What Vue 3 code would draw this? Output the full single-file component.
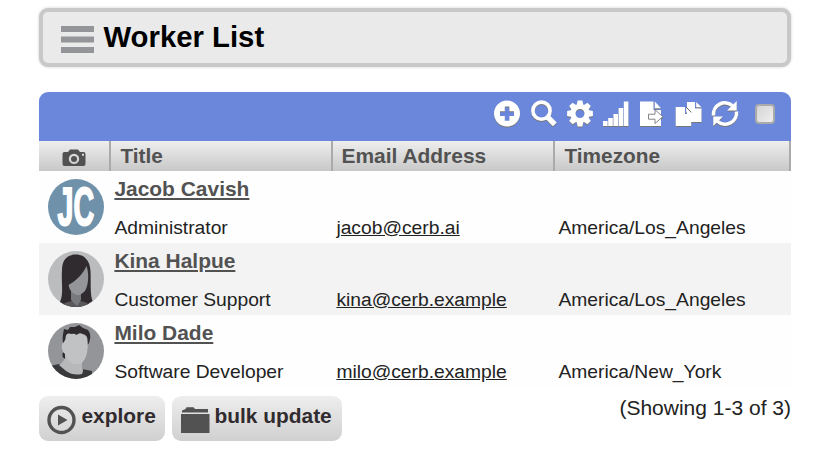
<script setup>
const workers = [
  { name: 'Jacob Cavish', title: 'Administrator', email: 'jacob@cerb.ai', zone: 'America/Los_Angeles', avatar: 'initials' },
  { name: 'Kina Halpue', title: 'Customer Support', email: 'kina@cerb.example', zone: 'America/Los_Angeles', avatar: 'woman' },
  { name: 'Milo Dade', title: 'Software Developer', email: 'milo@cerb.example', zone: 'America/New_York', avatar: 'man' },
]
</script>

<template>
  <main class="page">
    <header class="title-box">
      <svg class="menu" width="33" height="28" viewBox="0 0 33 28"><path fill="#949599" d="M0 0h33v6H0zM0 10.5h33v6H0zM0 21h33v6H0z" /></svg>
      <h1>Worker List</h1>
    </header>

    <section class="worklist">
      <div class="toolbar">
        <svg class="tool" width="28" height="30" viewBox="0 0 28 30"><path fill="#fff" fill-rule="evenodd" d="M14 1.500a13 13 0 1 0 0 26 13 13 0 0 0 0-26zM11.800 7.500h4.600v4.800H21v4.600h-4.600v4.800h-4.600v-4.800H7v-4.600h4.800z" /></svg>
        <svg class="tool" width="28" height="30" viewBox="0 0 28 30"><g fill="none" stroke="#fff"><circle cx="11.500" cy="11.700" r="8.600" stroke-width="3.600" /><path stroke-width="5.400" d="M17.200 17.600l7.600 7.700" /></g></svg>
        <svg class="tool" width="28" height="30" viewBox="0 0 28 30"><g transform="translate(14 14.500)"><g fill="#fff"><path v-for="n in 8" :key="n" :transform="`rotate(${n * 45})`" d="M-3.400-8l1-4.900h4.800l1 4.900z" /></g><circle r="7" fill="none" stroke="#fff" stroke-width="5" /></g></svg>
        <svg class="tool" width="28" height="30" viewBox="0 0 28 30"><path fill="#fff" d="M1 22h4.600v5H1zM6.200 19h4.600v8H6.200zM11.400 15H16v12h-4.600zM16.600 9h4.600v18h-4.600zM21.800 2.500h4.600V27h-4.600z" /></svg>
        <svg class="tool" width="28" height="30" viewBox="0 0 28 30"><path fill="#fff" d="M2 2.500h13.500v8.500h7.500V27H2zM16.800 2.500l6.200 6.700h-6.200z" /><path fill="#fff" stroke="#777" stroke-width=".9" d="M10.500 15.200H17v-4.500l7.800 7-7.800 6.800v-4.300h-6.500z" /></svg>
        <svg class="tool" width="28" height="30" viewBox="0 0 28 30"><path fill="#fff" d="M12 3h8v6.500h6.500V23H12z" /><path fill="#fff" d="M21.200 3l5.300 5.300h-5.300zM.7 8H10v7h6.200v12H.7zM11.200 8l5 5.500h-5z" /><path fill="none" stroke="#555" stroke-width=".9" d="M10.900 7.800l5.300 5.600" /></svg>
        <svg class="tool" width="28" height="30" viewBox="0 0 28 30"><g fill="none" stroke="#fff" stroke-width="3.500"><path d="M2.500 16.500A11.400 11.400 0 0 1 21.500 6.800M25.500 12.500A11.400 11.400 0 0 1 6.500 22.200" /></g><path fill="#fff" d="M25.700 2v9.500h-9.600zM2.300 27v-9.500h9.600z" /></svg>
        <span class="checkbox"></span>
      </div>

      <div class="columns">
        <div class="column photo">
          <svg width="24" height="18" viewBox="0 0 24 18"><path fill="#525252" fill-rule="evenodd" d="M2.500 3H6l2-2.600h8L18 3h3.500Q23.500 3 23.500 5v10q0 2-2 2h-19q-2 0-2-2V5q0-2 2-2zM12 4.700a5.200 5.200 0 1 0 0 10.400A5.200 5.200 0 0 0 12 4.700zm0 2.200a3 3 0 1 1 0 6A3 3 0 0 1 12 6.900zm8-2.200v2h2v-2z" /></svg>
        </div>
        <div class="column">Title</div>
        <div class="column email-column">Email Address</div>
        <div class="column">Timezone</div>
      </div>

      <article v-for="worker in workers" :key="worker.name" class="worker">
        <div class="portrait">
          <svg v-if="worker.avatar === 'initials'" class="avatar" viewBox="0 0 56 56">
            <circle cx="28" cy="28" r="28" fill="#6f92aa" />
            <text class="initials" transform="translate(9.500 46) scale(.54 1)">JC</text>
          </svg>
          <svg v-else-if="worker.avatar === 'woman'" class="avatar" viewBox="0 0 56 56">
            <circle cx="28" cy="28" r="28" fill="#bbbcbe" />
            <path fill="#302b2e" d="M12 51C16 43 13 31 14 19 14 8 20 3.500 28 3.500S42 9 42.500 20C43 32 42 43 44.500 50Q37 56 28 56T12 51z" />
            <path fill="#59595c" d="M15 53Q18 51 24 50l8 0q6 1 8 3-5 3-12 3t-13-3z" />
            <path fill="#78797c" d="M23 40h10v9l-4 6-6-6z" />
            <path fill="#949599" d="M38.500 15C41 22 41 33 37 40Q32 45 29 44 22 42 20.500 34C28 30 35 23 38.500 15z" />
          </svg>
          <svg v-else class="avatar" viewBox="0 0 56 56">
            <defs><clipPath id="portrait-circle"><circle cx="28" cy="28" r="28" /></clipPath></defs>
            <g clip-path="url(#portrait-circle)">
              <path fill="#949599" d="M0 0h56v56H0z" />
              <path fill="#39393b" d="M2 43l9-2 23 5 10 2v9H5z" />
              <path fill="#b7b8ba" d="M17 30h17v15q2 2 0 6-9 2-16-3L11 42q6-3 6-11z" />
              <path fill="#302b2e" d="M15 20c-1-5 0-9 1-14l4 1 2-3 5 0 4-2 4 3 5 2q4 5 1 13l-3 4V18H18v3h-3zM15 29l2 1v6q-4-2-2-7z" />
              <path fill="#c1c2c4" d="M17.500 16q0-7 6-5 3-1 5 1 3-3 6-1 5 1 5 6 1 6-.5 13-2 9-7.500 11h-6q-6-3-8.500-10l-2-2q-2-4-1-8l2-2z" />
            </g>
          </svg>
        </div>
        <a class="name">{{ worker.name }}</a>
        <div class="cell title-cell">{{ worker.title }}</div>
        <div class="cell"><a>{{ worker.email }}</a></div>
        <div class="cell">{{ worker.zone }}</div>
      </article>
    </section>

    <footer class="actions">
      <button class="explore" type="button">
        <svg width="30" height="30" viewBox="0 0 30 30"><circle cx="14.500" cy="15" r="12.500" fill="none" stroke="#525252" stroke-width="3.400" /><path fill="#525252" d="M11 9.500L20.500 15 11 20.500z" /></svg>
        <span>explore</span>
      </button>
      <button class="bulk" type="button">
        <svg width="30" height="30" viewBox="0 0 30 30"><path fill="#525252" d="M2 7.500V5.500L5.500 4l1-1.700h7L15 4h13v3.500zM1 9h28.500v19H1z" /></svg>
        <span>bulk update</span>
      </button>
      <span class="showing">(Showing 1-3 of 3)</span>
    </footer>
  </main>
</template>

<style>
body { margin: 0; background: #fff; }
</style>

<style scoped>
.page {
  box-sizing: border-box;
  width: 833px;
  height: 453px;
  padding: 8px 42px 0 39px;
  font-family: "Liberation Sans", Arial, sans-serif;
  color: #222;
}
svg { display: block; flex: none; }
.title-box {
  box-sizing: border-box;
  display: flex;
  height: 59px;
  padding: 14px 0 0 18px;
  border: 4px solid #c8c8c8;
  border-radius: 9px;
  background: #eaeaea;
  box-shadow: 0 0 3px #ccc;
}
.menu { margin-right: 9.500px; }
h1 { margin: -5px 0 0; font-size: 29.3px; line-height: 32px; color: #000; }
.worklist { margin-top: 25px; }
.toolbar {
  box-sizing: border-box;
  display: flex;
  gap: 8.3px;
  height: 49px;
  padding: 7px 16px 0 0;
  justify-content: flex-end;
  border-radius: 9px 9px 0 0;
  background: #6a87db;
}
.tool { filter: drop-shadow(0 1.5px 0 #777); }
.checkbox {
  box-sizing: border-box;
  width: 20px;
  height: 20px;
  margin: 5px 0 0 7.7px;
  border: 2px solid #aaa;
  border-radius: 4px;
  background: linear-gradient(135deg, #d5d5d5, #eee);
}
.columns {
  display: grid;
  grid-template-columns: 72px 222px 222px 236px;
  height: 30px;
  background: linear-gradient(#eee, #c8c8c8);
}
.column {
  box-sizing: border-box;
  padding-left: 9.500px;
  border-right: 2px solid #aaa;
  font-size: 20.8px;
  font-weight: bold;
  line-height: 30px;
  color: #525252;
}
.email-column { padding-left: 8.500px; font-size: 20.95px; }
.photo { padding: 8px 0 0 23px; }
.worker {
  display: grid;
  grid-template: 40px 32px / 75.4px 222px 222px 232.6px;
  height: 72px;
  background: #fefefe;
}
.worker:nth-of-type(even) { background: #f3f3f3; }
.portrait { grid-row: 1 / 3; padding: 8px 0 0 9px; }
.avatar { width: 56px; height: 56px; overflow: visible; }
.initials { font-size: 53px; font-weight: bold; fill: #fff; stroke: #fff; stroke-width: 2px; }
.name {
  grid-column: 2 / 5;
  font-size: 20.95px;
  font-weight: bold;
  line-height: 36px;
  color: #525252;
  text-decoration: underline;
}
.cell { font-size: 19.25px; line-height: 33px; }
.title-cell { grid-column: 2; }
.cell a { text-decoration: underline; }
.actions { display: flex; gap: 7px; margin-top: 9px; }
button {
  display: flex;
  gap: 4.500px;
  box-sizing: border-box;
  height: 45px;
  padding: 9px 0 0 8px;
  border: 0;
  border-radius: 9px;
  background: linear-gradient(#eee, #d0d0d0);
  color: #302b2e;
  font: bold 20.9px/22px "Liberation Sans", Arial, sans-serif;
}
.explore { width: 126px; }
.bulk { width: 170px; }
.showing { margin-left: auto; font-size: 21px; line-height: 24px; }
</style>
